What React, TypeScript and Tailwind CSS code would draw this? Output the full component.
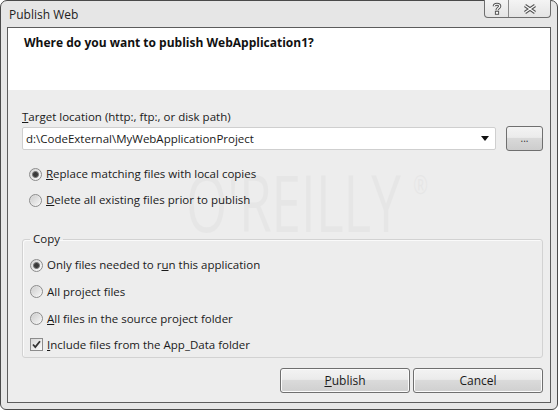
import React from "react";

function Radio({ checked }: { checked?: boolean }) {
  return (
    <div className="w-[13px] h-[13px] rounded-full border border-[#8c8c8c] bg-gradient-to-br from-[#d4d4d4] to-[#fbfbfb] flex items-center justify-center shrink-0">
      {checked ? (
        <div className="w-[7px] h-[7px] rounded-full bg-[#3a3a3a] border border-[#777]" />
      ) : (
        <div className="w-[9px] h-[9px] rounded-full bg-gradient-to-br from-[#cfcfcf] to-[#f4f4f4]" />
      )}
    </div>
  );
}

function Check() {
  return (
    <div className="w-[13px] h-[13px] border border-[#8c8c8c] bg-gradient-to-br from-[#d8d8d8] to-[#fbfbfb] flex items-center justify-center shrink-0">
      <svg width="11" height="11" viewBox="0 0 11 11">
        <path d="M2 5.5 L4.3 8 L9 2.2" fill="none" stroke="#333" strokeWidth="1.8" />
      </svg>
    </div>
  );
}

function Row({ children, h, box }: { children: React.ReactNode; h: string; box: React.ReactNode }) {
  return (
    <div className={`flex items-center ${h} pl-[7px] gap-[4px]`}>
      {box}
      <span>{children}</span>
    </div>
  );
}

export default function App() {
  return (
    <div className="w-[558px] h-[410px] bg-white font-['Open_Sans',sans-serif] text-[11.5px] text-[#1a1a1a]">
      <div className="w-[558px] h-[410px] flex flex-col bg-[#e6e6e6] border border-[#4a4a4a] rounded-t-[7px] rounded-b-[6px]">
        {/* title bar */}
        <div className="h-[26px] flex items-start shrink-0">
          <div className="pl-[8px] pt-[5px] text-[12px] text-[#222]">Publish Web</div>
          <div className="ml-auto mr-[6px] -mt-[1px] h-[18px] flex border border-t-0 border-[#6e6e6e] rounded-b-[4px] bg-gradient-to-b from-[#f4f4f4] to-[#e4e4e4] overflow-hidden">
            <div className="w-[24px] h-full flex items-center justify-center border-r border-[#8a8a8a]">
              <svg width="10" height="13" viewBox="0 0 10 13">
                <path d="M2.3 4.2 C2.3 1.6 7.7 1.6 7.7 4.2 C7.7 6 5 6 5 8.2" fill="none" stroke="#555" strokeWidth="3.2" />
                <path d="M2.3 4.2 C2.3 1.6 7.7 1.6 7.7 4.2 C7.7 6 5 6 5 8.2" fill="none" stroke="#fafafa" strokeWidth="1.2" />
                <rect x="3.4" y="9.3" width="3.2" height="3" fill="#fafafa" stroke="#555" strokeWidth="1" />
              </svg>
            </div>
            <div className="w-[41px] h-full flex items-center justify-center">
              <svg width="14" height="10" viewBox="0 0 14 10">
                <path d="M2 1.5 L12 8.5 M12 1.5 L2 8.5" fill="none" stroke="#555" strokeWidth="3.4" />
                <path d="M2 1.5 L12 8.5 M12 1.5 L2 8.5" fill="none" stroke="#fafafa" strokeWidth="1.4" />
              </svg>
            </div>
          </div>
        </div>

        {/* client area */}
        <div className="flex-1 mx-[6px] mb-[6px] border border-[#5c5c5c] bg-[#ededed] flex flex-col relative overflow-hidden">
          <div className="pointer-events-none absolute left-[178px] top-[135px] font-['Open_Sans',sans-serif] text-[78px] leading-none text-[#000] opacity-[0.025] scale-x-[0.68] origin-left whitespace-nowrap">
            O'REILLY<span className="text-[26px] align-top relative top-[8px] ml-[18px]">®</span>
          </div>

          <div className="h-[62px] bg-white shrink-0 pl-[16px] pt-[7px]">
            <div className="text-[12px] font-bold leading-[16px] text-[#111]">
              Where do you want to publish WebApplication1?
            </div>
          </div>

          <div className="flex-1 flex flex-col pl-[14px] pr-[7px] relative">
            <div className="mt-[19px] leading-[16px]">
              <u>T</u>arget location (http:, ftp:, or disk path)
            </div>
            <div className="flex items-center gap-[10px] mt-[1px]">
              <div className="flex-1 h-[23px] bg-white border border-[#cfcfcf] rounded-[2px] flex items-center pl-[3px] pr-[6px]">
                <span className="flex-1">d:\CodeExternal\MyWebApplicationProject</span>
                <svg width="8" height="5" viewBox="0 0 8 5">
                  <path d="M0 0 L8 0 L4 5 Z" fill="#111" />
                </svg>
              </div>
              <div className="w-[37px] h-[25px] rounded-[3px] border border-[#6f6f6f] bg-[linear-gradient(#f3f3f3_0%,#ebebeb_45%,#d9d9d9_50%,#cdcdcd_100%)] flex items-center justify-center text-[#333] text-[10px] leading-none pb-[2px]">
                ...
              </div>
            </div>

            <div className="mt-[10px]">
              <Row h="h-[26px]" box={<Radio checked />}>
                <u>R</u>eplace matching files with local copies
              </Row>
              <Row h="h-[26px]" box={<Radio />}>
                <u>D</u>elete all existing files prior to publish
              </Row>
            </div>

            <fieldset className="mt-[18px] border border-[#d2d2d2] rounded-[3px] pt-[5px] pb-0 shadow-[inset_1px_1px_0_#fafafa]">
              <legend className="ml-[7px] px-[3px] leading-[16px]">Copy</legend>
              <Row h="h-[26px]" box={<Radio checked />}>
                Only files needed to r<u>u</u>n this application
              </Row>
              <Row h="h-[27px]" box={<Radio />}>
                All pro<u>j</u>ect files
              </Row>
              <Row h="h-[27px]" box={<Radio />}>
                <u>A</u>ll files in the source project folder
              </Row>
              <Row h="h-[25px]" box={<Check />}>
                <u>I</u>nclude files from the App_Data folder
              </Row>
            </fieldset>

            <div className="mt-[10px] flex justify-end gap-[3px]">
              <div className="w-[130px] h-[25px] rounded-[3px] border border-[#6f6f6f] bg-[linear-gradient(#f3f3f3_0%,#ebebeb_45%,#dadada_50%,#cfcfcf_100%)] flex items-center justify-center text-[12px] text-[#1a1a1a] shadow-[inset_0_0_0_1px_#fbfbfb]">
                <span><u>P</u>ublish</span>
              </div>
              <div className="w-[130px] h-[25px] rounded-[3px] border border-[#6f6f6f] bg-[linear-gradient(#f3f3f3_0%,#ebebeb_45%,#dadada_50%,#cfcfcf_100%)] flex items-center justify-center text-[12px] text-[#1a1a1a] shadow-[inset_0_0_0_1px_#fbfbfb]">
                Cancel
              </div>
            </div>
          </div>
        </div>
      </div>
    </div>
  );
}
